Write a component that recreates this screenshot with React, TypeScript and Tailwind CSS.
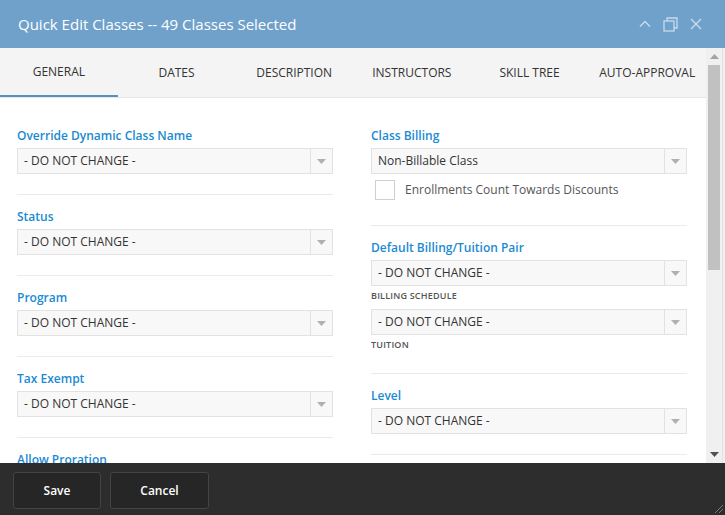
import React from "react";

const font = { fontFamily: '"Open Sans", "Noto Sans", Arial, sans-serif' };

const tabs = ["GENERAL", "DATES", "DESCRIPTION", "INSTRUCTORS", "SKILL TREE", "AUTO-APPROVAL"];

function Select({ value = "- DO NOT CHANGE -" }: { value?: string }) {
  return (
    <div className="flex h-[26px] border border-[#e2e2e2] bg-[#f8f8f8]">
      <div className="flex-1 flex items-center pl-[6px] text-[12px] text-[#333]">{value}</div>
      <div className="w-[22px] border-l border-[#e2e2e2] flex items-center justify-center">
        <svg width="9" height="5" viewBox="0 0 9 5">
          <path d="M0 0h9L4.5 5z" fill="#b0b0b0" />
        </svg>
      </div>
    </div>
  );
}

function Label({ children }: { children: React.ReactNode }) {
  return (
    <div className="h-[16px] leading-[18px] mb-[5px] text-[12px] font-semibold text-[#1a8ad3]">
      {children}
    </div>
  );
}

function Divider({ mt = "mt-[20px]" }: { mt?: string }) {
  return <div className={`${mt} mb-[13px] h-px bg-[#ebebeb]`} />;
}

function Field({ label }: { label: string }) {
  return (
    <div>
      <Label>{label}</Label>
      <Select />
      <Divider />
    </div>
  );
}

function SubLabel({ children }: { children: React.ReactNode }) {
  return (
    <div className="mt-[4px] h-[12px] leading-[12px] text-[9px] font-semibold text-[#555] tracking-[0.2px]">
      {children}
    </div>
  );
}

export default function App() {
  return (
    <div style={font} className="w-[725px] h-[515px] flex flex-col overflow-hidden bg-white">
      {/* title bar */}
      <div className="h-[48px] shrink-0 bg-[#6fa1cb] flex items-center justify-between pl-[18px] pr-[22px]">
        <span className="text-[15px] text-white">Quick Edit Classes -- 49 Classes Selected</span>
        <div className="flex items-center gap-[11px] text-[#c9dcec]">
          <svg width="14" height="14" viewBox="0 0 14 14" fill="none" stroke="currentColor" strokeWidth="1.4">
            <path d="M2 9.5l5-5 5 5" />
          </svg>
          <svg width="15" height="15" viewBox="0 0 15 15" fill="none" stroke="currentColor" strokeWidth="1.3">
            <rect x="1" y="4" width="10" height="10" />
            <path d="M4 4V1h10v10h-3" />
          </svg>
          <svg width="14" height="14" viewBox="0 0 14 14" fill="none" stroke="currentColor" strokeWidth="1.4">
            <path d="M2 2l10 10M12 2L2 12" />
          </svg>
        </div>
      </div>

      {/* body */}
      <div className="flex-1 flex min-h-0">
        <div className="w-[706px] flex flex-col min-h-0 overflow-hidden">
          <div className="h-[50px] shrink-0 bg-[#f4f4f4] flex border-b border-[#e6e6e6]">
            {tabs.map((t, i) => (
              <div
                key={t}
                className={`w-[118px] flex items-center justify-center text-[12px] text-[#333] ${
                  i === 0 ? "border-b-2 border-[#5b8fc2]" : ""
                }`}
              >
                {t}
              </div>
            ))}
          </div>

          <div className="flex-1 grid grid-cols-[316px_316px] gap-x-[38px] pl-[17px] pt-[29px]">
            <div>
              <Field label="Override Dynamic Class Name" />
              <Field label="Status" />
              <Field label="Program" />
              <Field label="Tax Exempt" />
              <Label>Allow Proration</Label>
            </div>

            <div>
              <Label>Class Billing</Label>
              <Select value="Non-Billable Class" />
              <div className="mt-[6px] flex items-center">
                <div className="ml-[4px] w-[20px] h-[20px] border border-[#cfcfcf] bg-white" />
                <span className="ml-[10px] text-[12px] text-[#555]">Enrollments Count Towards Discounts</span>
              </div>
              <Divider mt="mt-[25px]" />

              <Label>Default Billing/Tuition Pair</Label>
              <Select />
              <SubLabel>BILLING SCHEDULE</SubLabel>
              <div className="mt-[7px]">
                <Select />
              </div>
              <SubLabel>TUITION</SubLabel>
              <Divider mt="mt-[22px]" />

              <Label>Level</Label>
              <Select />
              <Divider />
            </div>
          </div>
        </div>

        {/* scrollbar */}
        <div className="w-[16px] bg-[#f0f0f0] flex flex-col items-center">
          <div className="h-[17px] flex items-center justify-center">
            <svg width="9" height="5" viewBox="0 0 9 5">
              <path d="M0 5h9L4.5 0z" fill="#a3a3a3" />
            </svg>
          </div>
          <div className="w-[12px] h-[205px] bg-[#c1c1c1]" />
          <div className="flex-1" />
          <div className="h-[17px] flex items-center justify-center">
            <svg width="9" height="5" viewBox="0 0 9 5">
              <path d="M0 0h9L4.5 5z" fill="#505050" />
            </svg>
          </div>
        </div>
        <div className="w-[3px] bg-[#f0f0f0] border-l border-[#e2e2e2]" />
      </div>

      {/* footer */}
      <div className="h-[52px] shrink-0 bg-[#2d2d2d] flex items-start pt-[9px] pl-[13px] gap-[9px] relative">
        <button className="w-[88px] h-[37px] rounded-[3px] border border-[#444] bg-[#262626] text-white text-[12px] font-semibold">
          Save
        </button>
        <button className="w-[99px] h-[37px] rounded-[3px] border border-[#444] bg-[#262626] text-white text-[12px] font-semibold">
          Cancel
        </button>
        <svg className="absolute right-[1px] bottom-[1px]" width="12" height="12" viewBox="0 0 12 12" stroke="#777" strokeWidth="1">
          <path d="M11 3L3 11M11 7L7 11" />
        </svg>
      </div>
    </div>
  );
}
